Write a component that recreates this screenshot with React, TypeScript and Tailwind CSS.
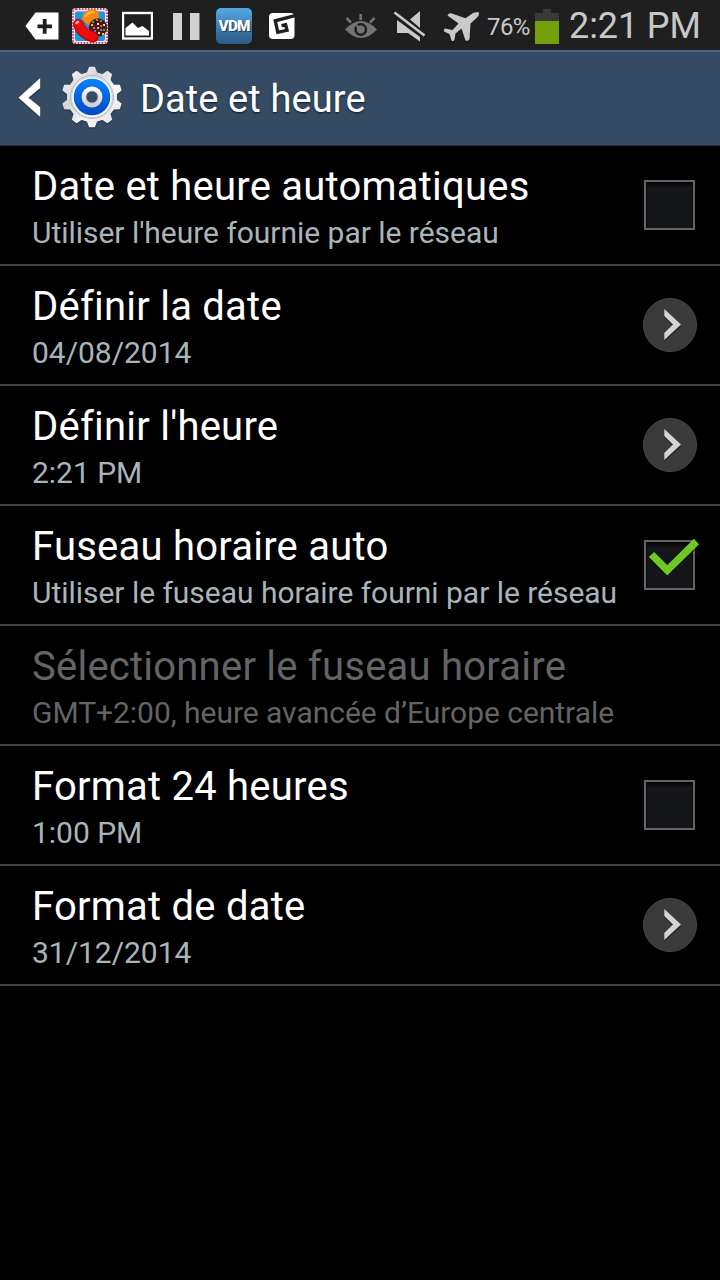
import clsx from "clsx";

interface SettingRowProps {
    title: string;
    summary: string;
    control?: "checkbox" | "arrow";
    checked?: boolean;
    disabled?: boolean;
}

const settings: SettingRowProps[] = [
    {
        title: "Date et heure automatiques",
        summary: "Utiliser l'heure fournie par le réseau",
        control: "checkbox",
    },
    { title: "Définir la date", summary: "04/08/2014", control: "arrow" },
    { title: "Définir l'heure", summary: "2:21 PM", control: "arrow" },
    {
        title: "Fuseau horaire auto",
        summary: "Utiliser le fuseau horaire fourni par le réseau",
        control: "checkbox",
        checked: true,
    },
    {
        title: "Sélectionner le fuseau horaire",
        summary: "GMT+2:00, heure avancée d’Europe centrale",
        disabled: true,
    },
    { title: "Format 24 heures", summary: "1:00 PM", control: "checkbox" },
    { title: "Format de date", summary: "31/12/2014", control: "arrow" },
];

function gearPath(teeth: number, inner: number, outer: number) {
    const step = (Math.PI * 2) / teeth;
    const point = (radius: number, angle: number) =>
        `${(radius * Math.sin(angle)).toFixed(2)} ${(-radius * Math.cos(angle)).toFixed(2)}`;
    const points: string[] = [];
    for (let i = 0; i < teeth; i++) {
        const a = i * step;
        points.push(
            point(inner, a - step * 0.29),
            point(outer, a - step * 0.13),
            point(outer, a + step * 0.13),
            point(inner, a + step * 0.29)
        );
    }
    return `M${points.join("L")}Z`;
}

function GearIcon() {
    return (
        <svg className="h-16 w-16" viewBox="-32 -32 64 64">
            <defs>
                <linearGradient id="gear-body" x1="0" y1="0" x2="1" y2="1">
                    <stop offset="0" stopColor="#ffffff" />
                    <stop offset="0.35" stopColor="#d5d5da" />
                    <stop offset="0.6" stopColor="#f8f8fa" />
                    <stop offset="1" stopColor="#e2e2e5" />
                </linearGradient>
                <linearGradient id="gear-disc" x1="0" y1="0" x2="0" y2="1">
                    <stop offset="0" stopColor="#0684f8" />
                    <stop offset="1" stopColor="#0547c4" />
                </linearGradient>
                <linearGradient id="gear-hub" x1="0" y1="0" x2="0" y2="1">
                    <stop offset="0" stopColor="#ffffff" />
                    <stop offset="1" stopColor="#c9ccd4" />
                </linearGradient>
            </defs>
            <path
                d={gearPath(10, 25, 30)}
                transform="translate(0 1)"
                fill="#1d2c3c"
                stroke="#1d2c3c"
                strokeWidth="1.5"
                strokeLinejoin="round"
                opacity="0.5"
            />
            <path
                d={gearPath(10, 24.5, 29.6)}
                fill="url(#gear-body)"
                stroke="url(#gear-body)"
                strokeWidth="1.5"
                strokeLinejoin="round"
            />
            <circle r="21.5" fill="#fafafa" stroke="#b4b8c4" strokeWidth="1" />
            <circle cy="0.3" r="20.5" fill="none" stroke="#c5cad4" strokeWidth="1" />
            <circle r="18.3" fill="url(#gear-disc)" />
            <circle cy="0.6" r="10.7" fill="#0442a8" opacity="0.6" />
            <circle r="10.5" fill="url(#gear-hub)" />
            <circle r="6" fill="#344b63" stroke="#a9b0ba" strokeWidth="0.8" />
        </svg>
    );
}

function CandyIcon() {
    return (
        <svg className="ml-3 h-[50px] w-9" viewBox="72 0 36 50">
            <rect x="72" y="8" width="36" height="36" rx="4" fill="#f8dce6" />
            <rect
                x="73"
                y="9"
                width="34"
                height="34"
                rx="3"
                fill="none"
                stroke="#b8497c"
                strokeWidth="2"
                strokeDasharray="1.5 1.5"
            />
            <rect x="75" y="11.5" width="30" height="29.5" rx="2" fill="#1b98dc" />
            <path d="M82 20C82 13 87 9.500 93 9.500C99 9.500 100 15 98 20L91 27Z" fill="#f58a12" />
            <path d="M85 17Q88 12 94 12" fill="none" stroke="#ffb83c" strokeWidth="2" />
            <circle cx="98" cy="27.5" r="9.2" fill="#4b1812" />
            <g strokeWidth="1.8" strokeLinecap="square">
                <path d="M93 22h.1M101 21h.1M104 30h.1" stroke="#22c13e" />
                <path d="M97 20h.1M101 26h.1M94 28h.1" stroke="#f0479c" />
                <path d="M98 24h.1M104 25h.1M99 33h.1" stroke="#f4e9e0" />
                <path d="M92 25h.1M98 28h.1M103 34h.1" stroke="#ffc52c" />
                <path d="M95 31h.1M101 30h.1" stroke="#3c8cf0" />
            </g>
            <path
                d="M78.500 24.500C81 32 86 35 93 37"
                fill="none"
                stroke="#b50808"
                strokeWidth="11"
                strokeLinecap="round"
            />
            <path
                d="M78.500 24C81 31 86 34.500 92.500 36.500"
                fill="none"
                stroke="#e90d0d"
                strokeWidth="9"
                strokeLinecap="round"
            />
            <path d="M76.500 23L78 22" stroke="#ffb4a4" strokeWidth="2.5" strokeLinecap="round" />
        </svg>
    );
}

function Notifications() {
    return (
        <div className="flex items-center pl-[25px]">
            <svg className="h-[50px] w-[35px]" viewBox="25 0 35 50">
                <path d="M35.500 12.500H58.500V39.500H35.500L25.500 26Z" fill="#fff" />
                <path d="M37.500 26.300H52M44.700 19V33.700" stroke="#1f1f1f" strokeWidth="3.8" />
            </svg>
            <CandyIcon />
            <svg className="ml-3.5 h-[50px] w-[31px]" viewBox="122 0 31 50">
                <rect x="123" y="13" width="29" height="25.500" fill="none" stroke="#fff" strokeWidth="2.4" />
                <path
                    d="M125.500 35.500V28L132.500 22.500L138 28L142.500 26L149 31V35.500Z"
                    fill="#fff"
                />
            </svg>
            <svg className="ml-5 h-[50px] w-[27px]" viewBox="173 0 27 50">
                <path d="M173 13h9v27h-9zM190 13h9.500v27h-9.500z" fill="#d2d2d2" />
            </svg>
            <div className="mt-[1px] ml-4 flex h-9 w-9 items-center justify-center rounded-[5px] bg-linear-to-b from-[#52abe4] to-[#2c5887]">
                <span className="scale-x-[1.1] text-[14px] leading-none font-black tracking-[-0.8px] text-white [text-shadow:1px_1px_1px_#173a5c]">
                    VDM
                </span>
            </div>
            <svg className="ml-4 h-[50px] w-7" viewBox="268 0 28 50">
                <rect x="269" y="13" width="25.500" height="26" rx="4" fill="#fff" />
                <path
                    d="M296 15.300L275.300 20.800L277.800 32.300L287 30.300L285.600 24.800L281.500 25.700"
                    fill="none"
                    stroke="#1f1f1f"
                    strokeWidth="3.4"
                />
            </svg>
        </div>
    );
}

function SystemIcons() {
    return (
        <div className="flex items-center">
            <svg className="h-[50px] w-8" viewBox="345 0 32 50">
                <path d="M345 29.500Q361 12.500 377 29.500Q361 46.500 345 29.500Z" fill="#737373" />
                <circle cx="360.800" cy="29.500" r="5.200" fill="none" stroke="#1f1f1f" strokeWidth="2.6" />
                <path d="M355.500 24.500L361 29.500" stroke="#737373" strokeWidth="2" />
                <path d="M346.500 18L351 22.500M360.700 14V20M374.500 18L370 22.500" stroke="#737373" strokeWidth="2.6" />
            </svg>
            <svg className="ml-4 h-[50px] w-[33px]" viewBox="393 0 33 50">
                <path d="M397 20L420 37V41.500L408 33H397Z" fill="#cacaca" />
                <path d="M410 19.500L420 11V28Z" fill="#cacaca" />
                <path d="M393.500 11L426 37" stroke="#1f1f1f" strokeWidth="6" />
                <path d="M394.500 12.500L424.500 35.500" stroke="#cacaca" strokeWidth="2.600" />
            </svg>
            <svg className="ml-[17px] h-[50px] w-[37px]" viewBox="443 0 37 50">
                <path
                    d="M479 12.500C476 11.500 472.500 12.500 469.500 15.500L465.500 18.300L451 13.200Q448.500 13 447.500 15.500L458.500 23.500L452.500 30L445 28.500Q443 30 444 31.500L449.500 34L451.500 40.500Q453.500 42 454.500 39.500L455.500 33.500L461.500 28.500L465.500 40.500Q468.500 41.500 469.500 39L470.500 23.500L475.500 19Q479.500 15.500 479 12.500Z"
                    fill="#cacaca"
                />
            </svg>
        </div>
    );
}

function StatusBar() {
    return (
        <div className="flex h-[50px] items-center bg-[#1f1f1f] text-[#c8c8c8]">
            <Notifications />
            <div className="ml-[49px] flex items-center">
                <SystemIcons />
                <span className="mt-1 ml-[7px] w-12 text-[24px] leading-none tracking-[-0.6px] whitespace-nowrap">76%</span>
                <div className="mt-[3px] flex h-[35px] w-6 flex-col items-center">
                    <div className="h-1 w-2 bg-[#393939]" />
                    <div className="h-2 w-6 bg-[#393939]" />
                    <div className="h-[23px] w-6 bg-[#73a10b]" />
                </div>
                <span className="mt-0.5 ml-[10px] text-[36px] leading-none tracking-[-0.1px] whitespace-nowrap">2:21 PM</span>
            </div>
        </div>
    );
}

function Header() {
    return (
        <header className="flex h-24 items-center border-t-2 border-b border-t-[#4d6880] border-b-[#1c2c3c] bg-[#344b63] pl-[18px]">
            <svg className="mb-[1px] h-10 w-[23px]" viewBox="18 78 23 40">
                <path d="M40.500 79.500V89.500L29 99L40.500 108.500V118.500L18.500 99Z" fill="#16212c" opacity="0.5" />
                <path d="M40.200 78V88L28.500 97.700L40.200 107.300V117L18.500 97.700Z" fill="#fff" />
            </svg>
            <div className="mb-[3px] ml-[19px]">
                <GearIcon />
            </div>
            <h1 className="ml-4 text-[38px] leading-none tracking-[0.1px] whitespace-nowrap text-white [text-shadow:0_1px_2px_#111c26]">
                Date et heure
            </h1>
        </header>
    );
}

function Checkbox({ checked }: { checked?: boolean }) {
    return (
        <div className="relative mr-[25px] h-[50px] w-[51px] shrink-0 border-2 border-[#646464] bg-[#15161a] shadow-[inset_0_3px_3px_#050506]">
            {checked && (
                <svg className="absolute -top-1 left-0 h-10 w-14" viewBox="646 538 56 40">
                    <path d="M651.500 556.500L667.300 572L696.500 543" fill="none" stroke="#000" strokeWidth="8" opacity="0.5" />
                    <path d="M651.500 554.500L667.300 570.300L696.500 541.500" fill="none" stroke="#70c822" strokeWidth="7.400" />
                </svg>
            )}
        </div>
    );
}

function ArrowButton() {
    return (
        <div className="mr-[23px] flex h-[54px] w-[54px] shrink-0 items-center justify-center rounded-full border border-[#464646] bg-[#3a3a3a]">
            <svg className="h-[54px] w-[54px] shrink-0" viewBox="643 298 54 54">
                <path d="M664.500 310.500V317.500L673 326L664.500 334.500V341.500L681.500 326Z" fill="#222" />
                <path d="M664.300 309V316L673 324.500L664.300 333V340L681 324.500Z" fill="#d3d3d3" />
            </svg>
        </div>
    );
}

function SettingRow({ title, summary, control, checked, disabled }: SettingRowProps) {
    return (
        <div className="flex h-[120px] items-center justify-between border-b-2 border-[#424242] pl-8">
            <div className="pt-2 whitespace-nowrap">
                <p
                    className={clsx(
                        "text-[40px] leading-[47px] tracking-[0.23px]",
                        disabled ? "text-[#646464]" : "text-white"
                    )}
                >
                    {title}
                </p>
                <p
                    className={clsx(
                        "text-[30px] leading-[45px] tracking-[-0.03px]",
                        disabled ? "text-[#646464]" : "text-[#a9b5ba]"
                    )}
                >
                    {summary}
                </p>
            </div>
            {control === "checkbox" && <Checkbox checked={checked} />}
            {control === "arrow" && <ArrowButton />}
        </div>
    );
}

export default function App() {
    return (
        <div className="h-[1280px] w-[720px] overflow-hidden bg-black font-[Roboto,sans-serif]">
            <StatusBar />
            <Header />
            <main>
                {settings.map((setting) => (
                    <SettingRow key={setting.title} {...setting} />
                ))}
            </main>
        </div>
    );
}
